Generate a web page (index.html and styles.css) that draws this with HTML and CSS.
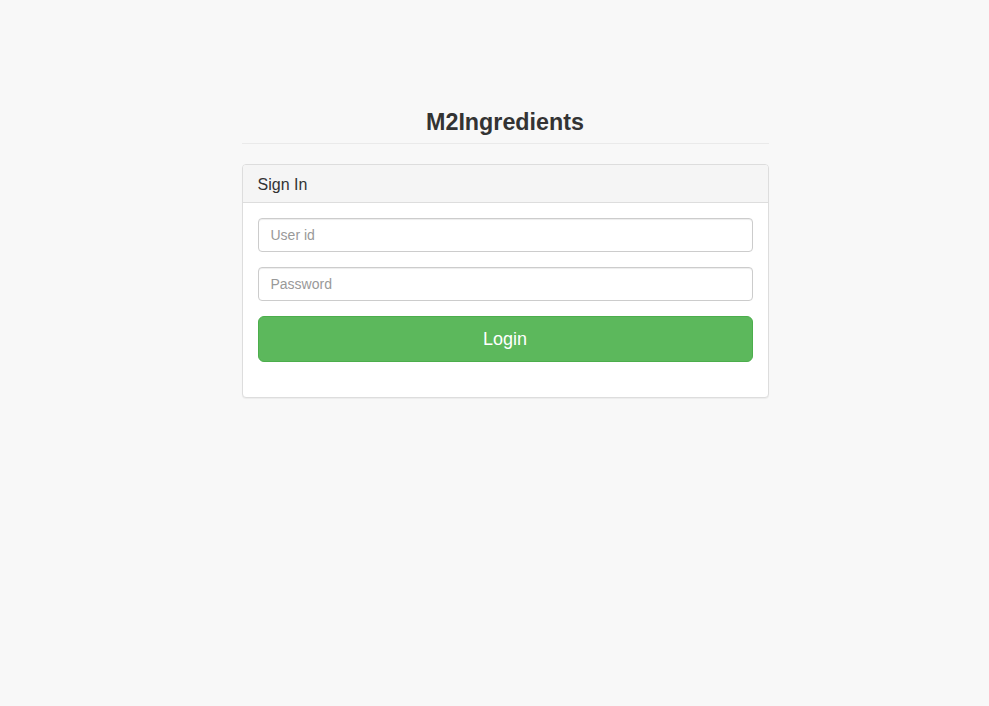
FILE: index.html
```html
<!DOCTYPE html>
<html>
<head>
<meta charset="utf-8">
<title>M2Ingredients</title>
<link rel="stylesheet" href="styles.css">
</head>
<body>
<div class="page">
  <div class="wrap">
    <h3 class="page-header">M2Ingredients</h3>
    <div class="panel">
      <div class="panel-heading">Sign In</div>
      <div class="panel-body">
        <form class="form">
          <div class="form-group"><input class="form-control" type="text" placeholder="User id"></div>
          <div class="form-group"><input class="form-control" type="password" placeholder="Password"></div>
          <button class="btn" type="button">Login</button>
        </form>
      </div>
    </div>
  </div>
</div>
</body>
</html>
```
FILE: styles.css
```css
* { box-sizing: border-box; }
html, body { margin: 0; padding: 0; }
body {
  background: #f8f8f8;
  font-family: "Liberation Sans", Arial, sans-serif;
  font-size: 14px;
  color: #333;
  height: 706px;
}
.page {
  display: flex;
  justify-content: center;
  padding-left: 21px;
  padding-top: 109px;
}
.wrap { width: 527px; }
.page-header {
  margin: 0 0 20px 0;
  padding-bottom: 8px;
  border-bottom: 1px solid #eaeaea;
  font-size: 23.3px;
  line-height: 26px;
  font-weight: bold;
  text-align: center;
  color: #333;
}
.panel {
  background: #fff;
  border: 1px solid #ddd;
  border-radius: 4px;
  box-shadow: 0 1px 1px rgba(0,0,0,0.05);
}
.panel-heading {
  background: #f5f5f5;
  border-bottom: 1px solid #ddd;
  border-radius: 3px 3px 0 0;
  padding: 11px 15px 9px;
  font-size: 16px;
  line-height: 17px;
  color: #333;
}
.panel-body { padding: 15px; }
.form { margin-bottom: 20px; }
.form-group { margin-bottom: 15px; }
.form-control {
  display: block;
  width: 100%;
  height: 34px;
  padding: 6px 12px;
  font-family: "Liberation Sans", Arial, sans-serif;
  font-size: 14px;
  line-height: 20px;
  color: #555;
  background: #fff;
  border: 1px solid #ccc;
  border-radius: 4px;
  box-shadow: inset 0 1px 1px rgba(0,0,0,0.075);
  outline: none;
}
.form-control::placeholder { color: #999; }
.btn {
  display: block;
  width: 100%;
  height: 46px;
  padding: 10px 16px;
  font-family: "Liberation Sans", Arial, sans-serif;
  font-size: 18px;
  line-height: 24px;
  color: #fff;
  background: #5cb85c;
  border: 1px solid #4cae4c;
  border-radius: 6px;
  cursor: pointer;
}
```
